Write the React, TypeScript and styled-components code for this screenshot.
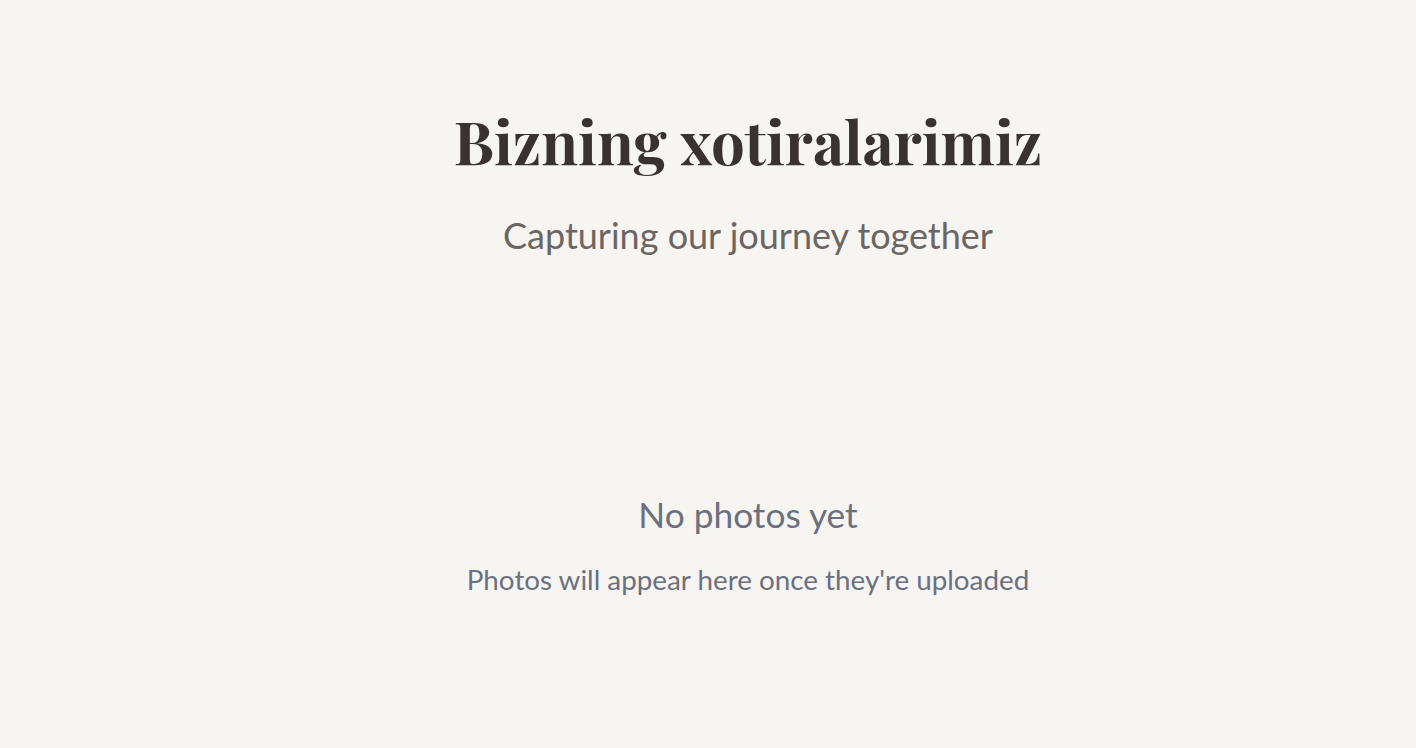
import React from "react";
import styled, { createGlobalStyle } from "styled-components";

const Global = createGlobalStyle`
  html, body { margin: 0; padding: 0; background: #f7f5f2; }
  body { font-family: Lato, "Noto Sans", sans-serif; }
`;

const Page = styled.main`
  min-height: 748px;
  box-sizing: border-box;
  padding-left: 80px;
  background: #f7f5f2;
  display: flex;
  flex-direction: column;
  align-items: center;
`;

const Header = styled.header`
  display: flex;
  flex-direction: column;
  align-items: center;
  padding-top: 104px;
`;

const Title = styled.h1`
  margin: 0;
  font-family: "Playfair Display", "DejaVu Serif", "Liberation Serif", serif;
  font-weight: 700;
  font-size: 60px;
  line-height: 72px;
  color: #3a3230;
`;

const Subtitle = styled.p`
  margin: 37px 0 0;
  font-family: Lato, sans-serif;
  font-size: 36px;
  line-height: 44px;
  color: #6b6663;
`;

const Empty = styled.section`
  display: flex;
  flex-direction: column;
  align-items: center;
  margin-top: 236px;
`;

const EmptyTitle = styled.h2`
  margin: 0;
  font-family: Lato, sans-serif;
  font-weight: 400;
  font-size: 35.3px;
  line-height: 44px;
  color: #6b7080;
`;

const EmptyText = styled.p`
  margin: 25px 0 0;
  font-family: Lato, sans-serif;
  font-size: 27.8px;
  line-height: 36px;
  color: #6b7080;
`;

export default function App() {
  return (
    <>
      <Global />
      <Page>
        <Header>
          <Title>Bizning xotiralarimiz</Title>
          <Subtitle>Capturing our journey together</Subtitle>
        </Header>
        <Empty>
          <EmptyTitle>No photos yet</EmptyTitle>
          <EmptyText>Photos will appear here once they're uploaded</EmptyText>
        </Empty>
      </Page>
    </>
  );
}
